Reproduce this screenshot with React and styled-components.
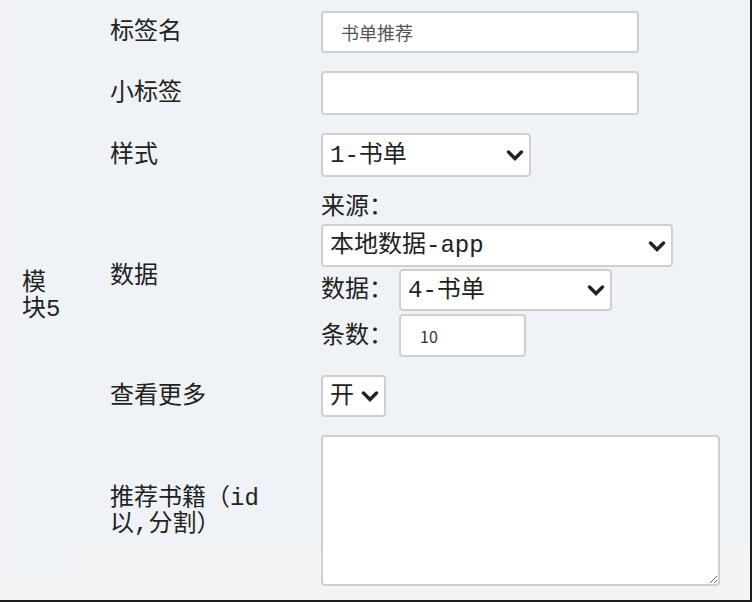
import React from 'react'
import styled, { createGlobalStyle } from 'styled-components'

const GlobalStyle = createGlobalStyle`
  html, body {
    margin: 0;
    padding: 0;
    background: #f3f3f3;
  }
  body {
    font-family: "Liberation Mono", "Noto Sans CJK SC", monospace;
    color: #222;
  }
`

const Frame = styled.div`
  box-sizing: border-box;
  width: 752px;
  height: 602px;
  padding-left: 7px;
  background: #f3f3f3;
  border-right: 2px solid #1e1e1e;
  border-bottom: 2px solid #1e1e1e;
  display: flex;
  align-items: flex-start;
`
const ModuleName = styled.div`
  box-sizing: border-box;
  width: 70px;
  height: 575px;
  padding: 19px 15px 0;
  background: #eff3f7;
  display: flex;
  align-items: center;
  font-size: 24px;
  line-height: 26px;
`
const Fields = styled.div`
  box-sizing: border-box;
  flex: 1;
  height: 545px;
  padding-top: 2px;
  background: #eff3f7;
`
const Row = styled.div`
  display: grid;
  grid-template-columns: 244px 1fr;
  align-items: center;
  padding: 9px 0;
`
const Label = styled.div`
  padding: 2px 50px 0 33px;
  font-size: 24px;
  line-height: 26px;
`
const Value = styled.div`
  display: flex;
  flex-direction: column;
  align-items: flex-start;
  gap: 2px;
`
const Caption = styled.div`
  height: 27px;
  font-size: 24px;
  line-height: 26px;
`
const SubRow = styled.div`
  display: flex;
  align-items: center;
  height: ${({ $h }) => $h}px;
  margin-top: ${({ $top }) => $top || 0}px;
`
const SubLabel = styled.span`
  width: 78px;
  padding-top: 2px;
  font-size: 24px;
  line-height: 26px;
`
const TextInput = styled.input`
  box-sizing: border-box;
  width: ${({ $w }) => $w}px;
  height: ${({ $h }) => $h}px;
  padding: 0 0 0 ${({ $pad }) => $pad || 8}px;
  border: 2px solid #cfcfcf;
  border-radius: 4px;
  background: #fff;
  font-family: "Noto Sans CJK SC", sans-serif;
  font-size: ${({ $size }) => $size || 18}px;
  color: ${({ $color }) => $color || '#555'};
  outline: none;
`
const SelectWrap = styled.div`
  position: relative;
  width: ${({ $w }) => $w}px;
  height: ${({ $h }) => $h}px;
`
const Select = styled.select`
  box-sizing: border-box;
  appearance: none;
  width: 100%;
  height: 100%;
  padding: 0 30px 0 7px;
  border: 2px solid #cfcfcf;
  border-radius: 4px;
  background: #fff;
  font-family: "Liberation Mono", "Noto Sans CJK SC", monospace;
  font-size: 24px;
  color: #222;
  outline: none;
`
const Chevron = styled.svg`
  position: absolute;
  right: 7px;
  top: 50%;
  margin-top: -5px;
  pointer-events: none;
`
const TextArea = styled.textarea`
  box-sizing: border-box;
  width: 399px;
  height: 151px;
  border: 2px solid #cfcfcf;
  border-radius: 4px;
  background: #fff;
  outline: none;
`

const Dropdown = ({ w, h, options }) => (
  <SelectWrap $w={w} $h={h}>
    <Select defaultValue={options[0]}>
      {options.map((o) => (
        <option key={o}>{o}</option>
      ))}
    </Select>
    <Chevron width="18" height="11" viewBox="0 0 18 11">
      <polyline
        points="2.5,2 9,8.5 15.5,2"
        fill="none"
        stroke="#222"
        strokeWidth="3.4"
        strokeLinecap="round"
      />
    </Chevron>
  </SelectWrap>
)

const App = () => {
  return (
    <>
      <GlobalStyle />
      <Frame>
        <ModuleName>模块5</ModuleName>
        <Fields>
          <Row>
            <Label>标签名</Label>
            <Value>
              <TextInput $w={318} $h={42} $pad={18} defaultValue="书单推荐" />
            </Value>
          </Row>
          <Row>
            <Label>小标签</Label>
            <Value>
              <TextInput $w={318} $h={44} />
            </Value>
          </Row>
          <Row>
            <Label>样式</Label>
            <Value>
              <Dropdown w={210} h={44} options={['1-书单', '2-推荐']} />
            </Value>
          </Row>
          <Row>
            <Label>数据</Label>
            <Value>
              <Caption>来源：</Caption>
              <Dropdown w={352} h={43} options={['本地数据-app']} />
              <SubRow $h={42}>
                <SubLabel>数据：</SubLabel>
                <Dropdown w={213} h={42} options={['4-书单']} />
              </SubRow>
              <SubRow $h={43} $top={1}>
                <SubLabel>条数：</SubLabel>
                <TextInput $w={127} $h={43} $pad={19} $size={16} $color="#333" defaultValue="10" />
              </SubRow>
            </Value>
          </Row>
          <Row>
            <Label>查看更多</Label>
            <Value>
              <Dropdown w={65} h={42} options={['开', '关']} />
            </Value>
          </Row>
          <Row>
            <Label>推荐书籍（id以,分割）</Label>
            <Value>
              <TextArea />
            </Value>
          </Row>
        </Fields>
      </Frame>
    </>
  )
}

export default App
